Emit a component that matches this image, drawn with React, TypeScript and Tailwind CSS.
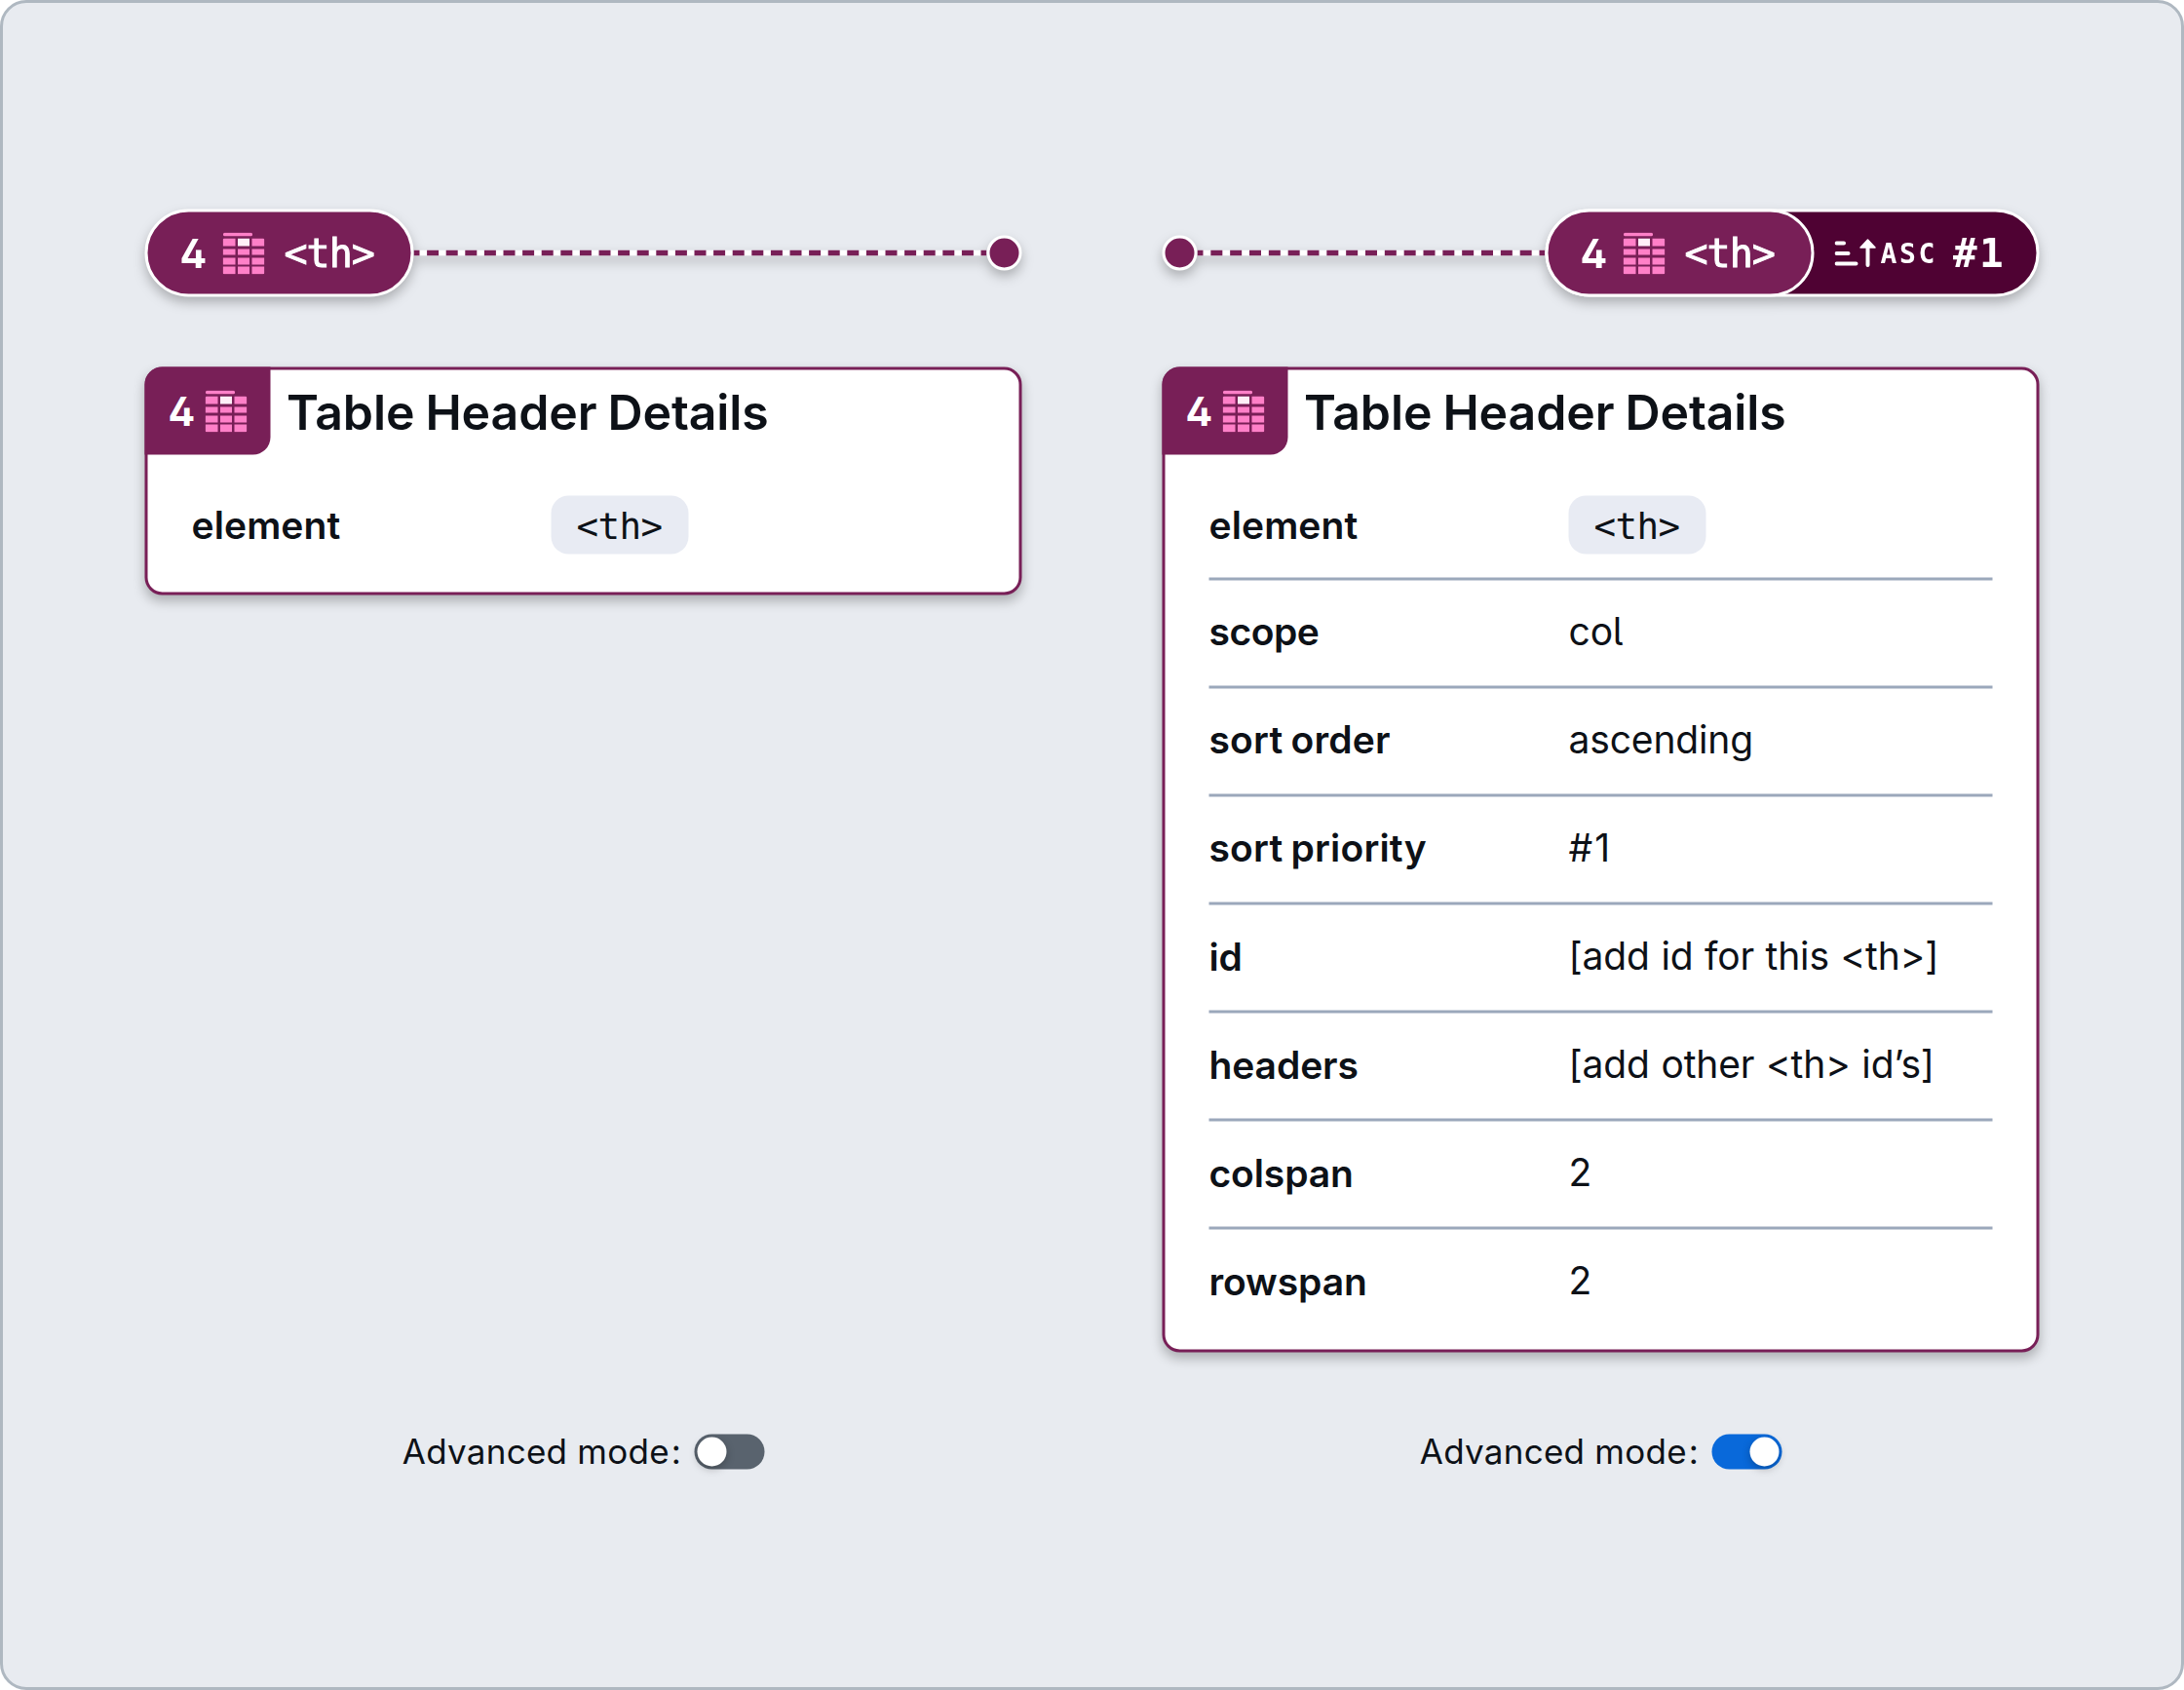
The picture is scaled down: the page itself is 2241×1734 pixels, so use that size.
import React from "react";

function TableIcon({ className = "" }: { className?: string }) {
  const cols = [
    { x: 0, w: 13 },
    { x: 15.5, w: 12 },
    { x: 30, w: 13 },
  ];
  const rows = [
    { y: 6, h: 8 },
    { y: 17, h: 6 },
    { y: 26, h: 7 },
    { y: 35, h: 8 },
  ];
  return (
    <svg viewBox="0 0 43 43" className={`h-[43px] w-[43px] shrink-0 ${className}`}>
      <rect x="0.5" y="0.3" width="30" height="3.4" rx="1.5" fill="#ff80c8" />
      <clipPath id="table-grid">
        <rect x="0" y="6" width="43" height="37" rx="1.8" />
      </clipPath>
      <g clipPath="url(#table-grid)">
        {rows.map((r, i) =>
          cols.map((c, j) => (
            <rect
              key={`${i}-${j}`}
              x={c.x}
              y={r.y}
              width={c.w}
              height={r.h}
              fill={i === 0 && j === 1 ? "#ffeff7" : "#ff80c8"}
            />
          )),
        )}
      </g>
    </svg>
  );
}

function SortAscIcon() {
  return (
    <svg viewBox="0 0 43 30" className="h-[30px] w-[43px] shrink-0" fill="none" stroke="#fff" strokeWidth="4" strokeLinecap="round">
      <path d="M2 5h7.5M2 15.5h12M2 26h20M34 27.5V6" />
      <path d="M34 1.5l7.5 8h-15z" fill="#fff" strokeWidth="1.5" strokeLinejoin="round" />
    </svg>
  );
}

function Four({ className = "" }: { className?: string }) {
  return (
    <span className={`w-[44px] shrink-0 text-[41px] leading-none font-bold [font-feature-settings:'cv02'] ${className}`}>4</span>
  );
}

function Tag() {
  return (
    <div className="flex h-[90px] w-[276px] shrink-0 items-center rounded-full border-[3px] border-white bg-[#781f57] pl-[33px] text-white">
      <Four />
      <TableIcon />
      <span className="ml-[20px] font-['DejaVu_Sans_Mono',monospace] text-[40px] leading-none tracking-[-1px] [-webkit-text-stroke:0.9px_white]">
        &lt;th&gt;
      </span>
    </div>
  );
}

function SortedTag() {
  return (
    <div className="flex h-[90px] w-[507px] shrink-0 items-center rounded-full border-[3px] border-white bg-[#4f0233] text-white">
      <div className="-m-[3px]">
        <Tag />
      </div>
      <div className="ml-[24px] flex items-center font-['DejaVu_Sans_Mono',monospace] font-bold">
        <SortAscIcon />
        <span className="mt-[2px] ml-[4px] text-[28px] leading-none tracking-[2.6px]">ASC</span>
        <span className="mt-[1px] ml-[16px] text-[41px] leading-none tracking-[2.4px]">#1</span>
      </div>
    </div>
  );
}

function Dot() {
  return <div className="h-[36px] w-[36px] shrink-0 rounded-full border-[3px] border-white bg-[#781f57]" />;
}

function Connector({ length, dashes }: { length: number; dashes: number }) {
  const period = length / dashes;
  return (
    <svg viewBox={`0 0 ${length} 6`} className="h-[6px] min-w-0 flex-1" preserveAspectRatio="none">
      <rect width={length} height="6" fill="#fff" />
      <line x1="0" y1="3" x2={length} y2="3" stroke="#781f57" strokeWidth="6" strokeDasharray={`12 ${period - 12}`} strokeDashoffset="6" />
    </svg>
  );
}

type Row = { label: string; value: React.ReactNode; low?: boolean };

const elementRow: Row = {
  label: "element",
  low: true,
  value: (
    <span className="flex h-[60px] w-[141px] items-center justify-center rounded-[18px] bg-[#e8ebf3] pt-[3px] pr-[1px] font-['DejaVu_Sans_Mono',monospace] text-[37.5px] leading-none tracking-[-0.6px]">
      &lt;th&gt;
    </span>
  ),
};

const advancedRows: Row[] = [
  elementRow,
  { label: "scope", value: "col" },
  { label: "sort order", value: "ascending" },
  { label: "sort priority", value: <span className="tracking-[2px]">#1</span> },
  { label: "id", value: "[add id for this <th>]", low: true },
  { label: "headers", value: "[add other <th> id’s]", low: true },
  { label: "colspan", value: "2", low: true },
  { label: "rowspan", value: "2", low: true },
];

function DetailsCard({ rows }: { rows: Row[] }) {
  return (
    <section className="rounded-[18px] border-[3px] border-[#781f57] bg-white pb-[15px] shadow-[0_6px_12px_rgba(0,0,0,0.25)]">
      <header className="flex h-[87px] items-center">
        <div className="-mt-[3px] -ml-[3px] flex h-[90px] w-[129px] items-center rounded-tl-[18px] rounded-br-[18px] bg-[#781f57] pl-[24px] text-white">
          <Four className="-mr-[6px] mt-[1px]" />
          <TableIcon />
        </div>
        <h2 className="ml-[16.5px] pb-[2px] text-[50px] leading-none font-[630] tracking-[-0.1px] [word-spacing:-1.5px]">Table Header Details</h2>
      </header>
      <dl className="mx-[45px] mt-[18px] divide-y-[3px] divide-[#9ba8bb]">
        {rows.map((row) => (
          <div key={row.label} className="flex h-[111px] items-center last:h-[108px]">
            <dt
              className={`w-[369px] font-[630] [word-spacing:-2px] ${
                row.label === "element"
                  ? "pb-[2px] tracking-[0.1px]"
                  : row.label === "scope"
                    ? "pb-[6px] tracking-[-0.5px]"
                    : row.low
                      ? "pb-[3px] tracking-[-0.1px]"
                      : "pb-[6px] tracking-[0.2px]"
              }`}
            >
              {row.label}
            </dt>
            <dd className={`tracking-[-0.15px] [font-feature-settings:'cv05'] [word-spacing:0.8px] ${row.label === "element" ? "" : "pb-[6px]"}`}>
              {row.value}
            </dd>
          </div>
        ))}
      </dl>
    </section>
  );
}

function ModeSwitch({ on }: { on: boolean }) {
  return (
    <div className="mt-auto flex h-[36px] items-center justify-center text-[35px] leading-none">
      <span className="pb-[1px] tracking-[0.25px]">
        Advanced mode<span className="ml-[2px]">:</span>
      </span>
      <div className={`ml-[13px] flex h-[36px] w-[72px] items-center rounded-full px-[3px] ${on ? "justify-end bg-[#0969da]" : "justify-start bg-[#59636e]"}`}>
        <div className="h-[30px] w-[30px] rounded-full bg-white shadow-[0_3px_8px_rgba(0,0,0,0.25)]" />
      </div>
    </div>
  );
}

export default function App() {
  return (
    <div className="h-[1734px] w-[2241px] bg-white font-[Inter,sans-serif] text-[39px] leading-none text-[#0d1117]">
      <div className="h-full rounded-[27px] border-[3px] border-[#afb8c1] bg-[#e8ebf0] pt-[211px] pl-[146px]">
        <main className="flex h-[1293px] translate-x-[-0.5px] translate-y-[0.5px] gap-[144px]">
          <div className="flex w-[900px] flex-col gap-[72px]">
            <div className="flex items-center drop-shadow-[0_6px_6px_rgba(0,0,0,0.25)]">
              <Tag />
              <Connector length={588} dashes={30} />
              <Dot />
            </div>
            <DetailsCard rows={[elementRow]} />
            <ModeSwitch on={false} />
          </div>
          <div className="flex w-[900px] flex-col gap-[72px]">
            <div className="flex items-center drop-shadow-[0_6px_6px_rgba(0,0,0,0.25)]">
              <Dot />
              <Connector length={357} dashes={18} />
              <SortedTag />
            </div>
            <DetailsCard rows={advancedRows} />
            <ModeSwitch on />
          </div>
        </main>
      </div>
    </div>
  );
}
